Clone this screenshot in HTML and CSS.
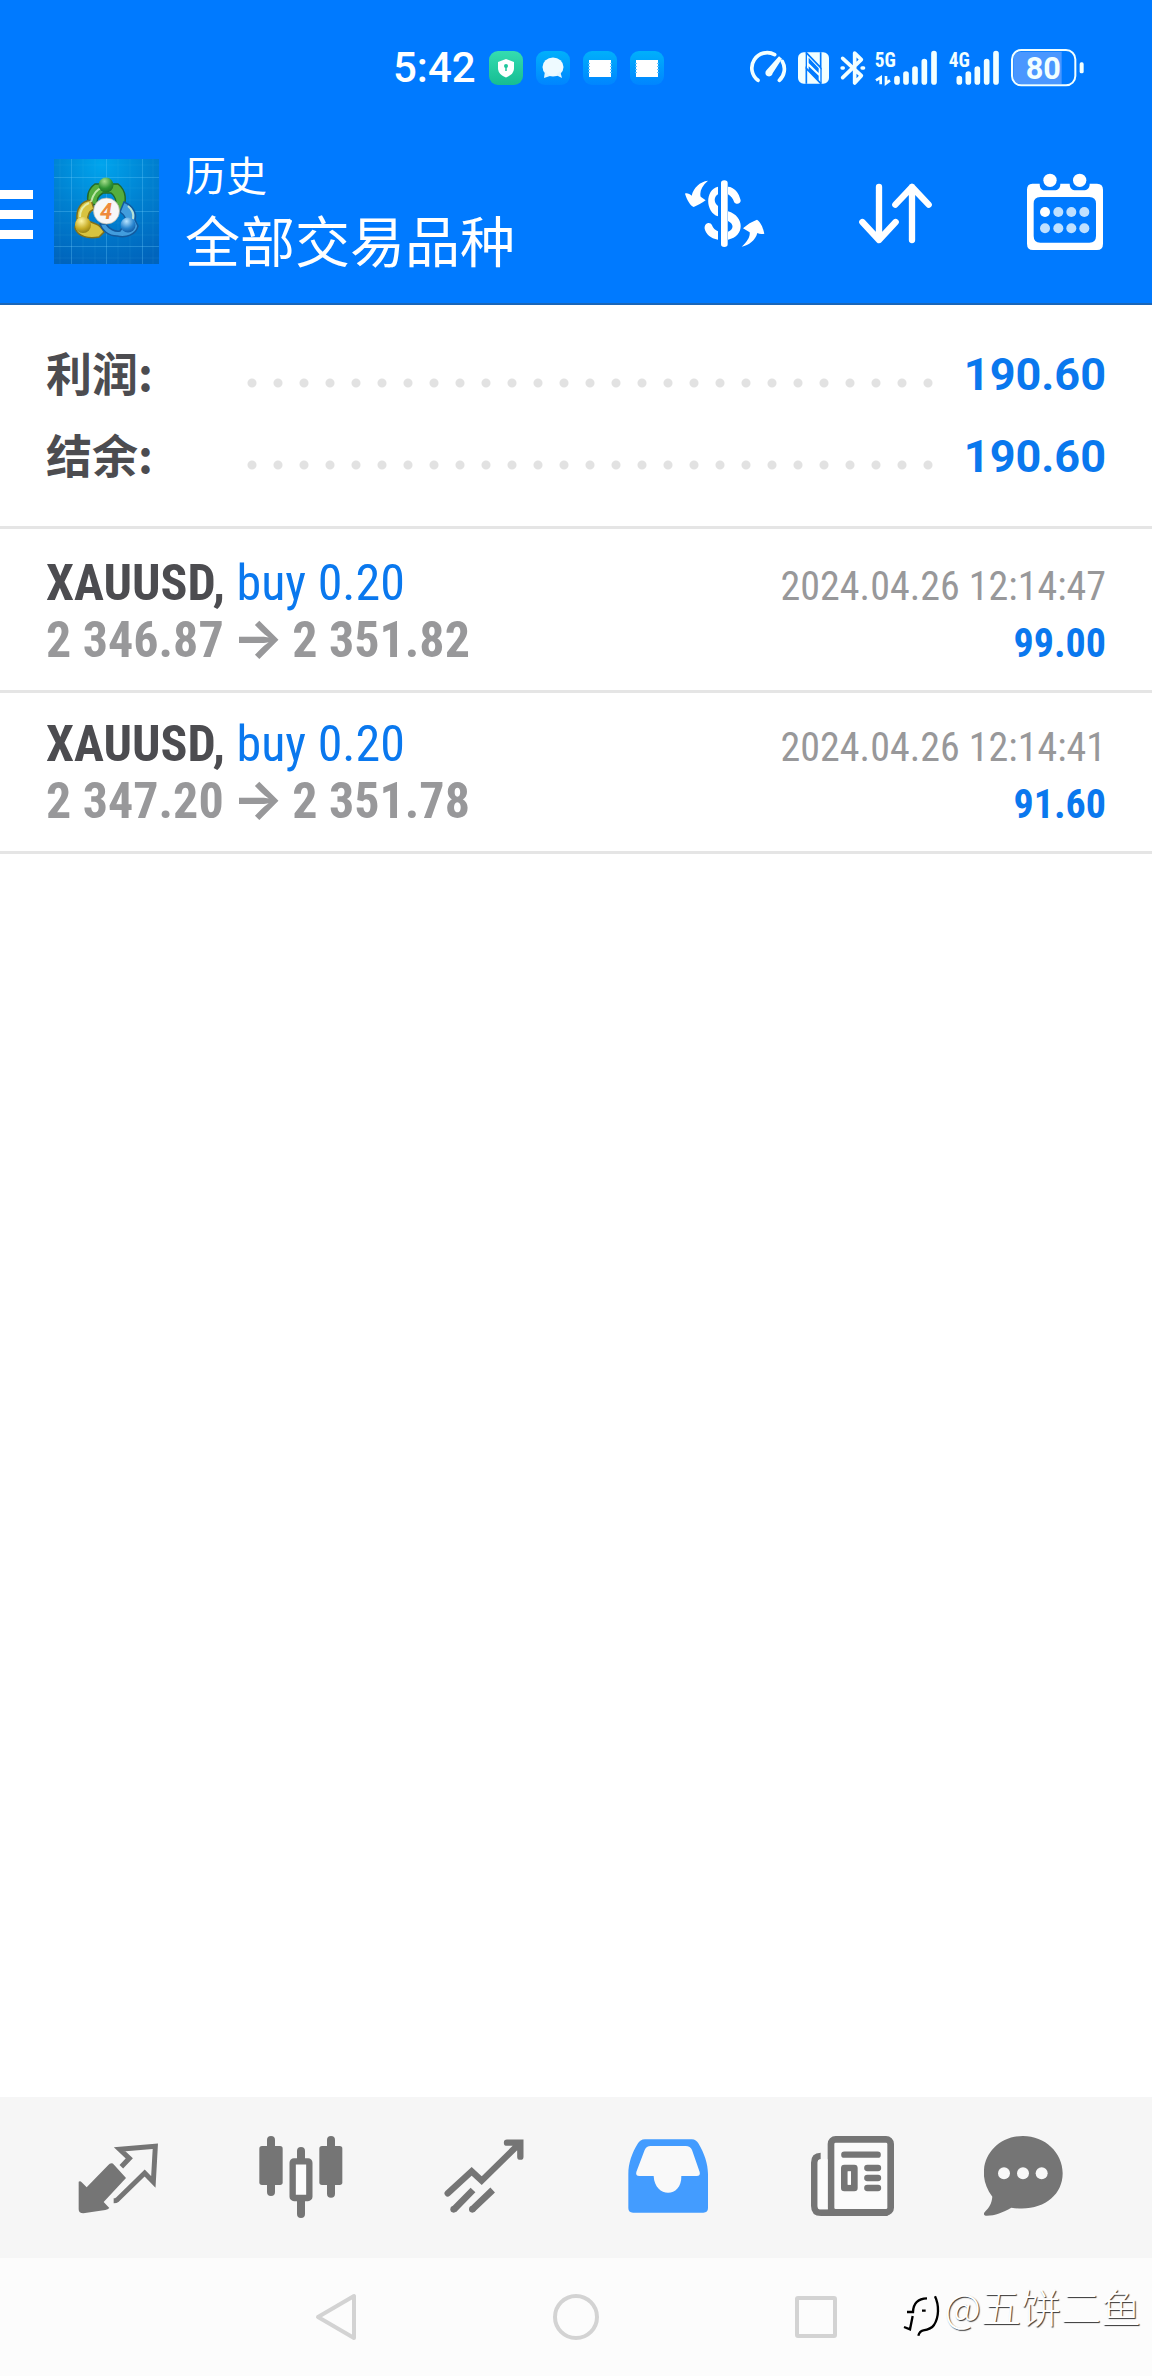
FILE: index.html
```html
<!DOCTYPE html>
<html lang="zh-CN">
<head>
<meta charset="utf-8">
<meta name="viewport" content="width=device-width, initial-scale=1">
<title>历史</title>
<link rel="stylesheet" href="styles.css">
</head>
<body>
<div class="app">
  <header class="top">
    <div class="status">
      <div class="status-group status-left">
        <span class="clock">5:42</span>
        <svg class="notice" viewBox="0 0 34 34" aria-hidden="true"><rect width="34" height="34" rx="9" fill="url(#green)"/><path d="M17 8l8 3v6c0 5-3.500 7.500-8 9.500C12.500 24.500 9 22 9 17v-6z" fill="#fff"/><circle cx="17" cy="15" r="2" fill="#1fc79c"/><path d="M17 15v5" stroke="#1fc79c" stroke-width="1.500"/></svg>
        <svg class="notice" viewBox="0 0 34 34" aria-hidden="true"><rect width="34" height="34" rx="9" fill="url(#cyan)"/><ellipse cx="17" cy="16" rx="10.500" ry="9.500" fill="#eefaff"/><path d="M9 20l-1 7 6-2zM24 20l2 7-6-3z" fill="#e3f6ff"/></svg>
        <svg class="notice" viewBox="0 0 34 34" aria-hidden="true"><rect width="34" height="34" rx="9" fill="url(#cyan)"/><path d="M6 9h22v17H6z" fill="#fff"/><path d="M6 12v11M28 12v11" stroke="#59c0ff" stroke-width="2" stroke-dasharray="1 2"/></svg>
        <svg class="notice" viewBox="0 0 34 34" aria-hidden="true"><rect width="34" height="34" rx="9" fill="url(#cyan)"/><path d="M6 9h22v17H6z" fill="#fff"/><path d="M6 12v11M28 12v11" stroke="#59c0ff" stroke-width="2" stroke-dasharray="1 2"/></svg>
      </div>
      <div class="status-group status-right">
        <svg width="45" height="42" viewBox="57 50 135 126" aria-hidden="true"><path d="M84 150A46 46 0 0 1 134 73M157 93A46 46 0 0 1 148 150" fill="none" stroke="#f2ffff" stroke-width="11" stroke-linecap="round"/><path d="M147 78l9 7-28 44a11 11 0 1 1-18-10z" fill="#f2ffff"/></svg>
        <svg width="42" height="42" viewBox="192 50 126 126" aria-hidden="true"><rect x="204" y="66" width="93" height="94" rx="17" fill="#f2ffff"/><path d="M228 66l44 46V66M273 160l-44-46v46" fill="none" stroke="#007aff" stroke-width="5"/><path d="M236 82l30 32v14l-30-30zM236 108l30 28v14l-30-28z" fill="#007aff"/><path d="M229 66v50M273 112v48" stroke="#007aff" stroke-width="4"/></svg>
        <svg width="35" height="42" viewBox="318 50 105 126" aria-hidden="true"><path d="M338 84l56 52-20 22V68l20 20-56 54" fill="none" stroke="#f2ffff" stroke-width="11" stroke-linejoin="round" stroke-linecap="round"/><path d="M336 113h4M396 113h5" stroke="#f2ffff" stroke-width="10" stroke-linecap="round"/></svg>
        <svg width="72" height="42" viewBox="423 50 216 126" role="img" aria-label="5G"><text class="net" x="434" y="109">5G</text><path d="M501 155v-10M528 155v-24M555 155v-39M583 155v-61M612 155V70" stroke="#f2ffff" stroke-width="17" stroke-linecap="round"/><path d="M438 150l14-9v21M468 137v22l12-9" fill="none" stroke="#f2ffff" stroke-width="8"/></svg>
        <svg width="61" height="42" viewBox="639 50 183 126" role="img" aria-label="4G"><text class="net" x="656" y="109">4G</text><path d="M688 155v-10M715 155v-24M742 155v-39M770 155v-61M798 155V70" stroke="#f2ffff" stroke-width="17" stroke-linecap="round"/></svg>
        <svg width="84" height="42" viewBox="822 50 252 126" role="img" aria-label="80%"><path d="M875 64h120v97H875q-25 0-25-25V89q0-25 25-25z" fill="#4a97ff"/><rect x="846" y="59" width="190" height="106" rx="28" fill="none" stroke="#f2ffff" stroke-width="6"/><rect x="1049" y="96" width="12" height="33" rx="5" fill="#f2ffff"/><text class="charge" x="940" y="146">80</text></svg>
      </div>
    </div>
    <div class="appbar">
      <button class="menu" type="button" aria-label="菜单"><svg width="34" height="50" viewBox="0 0 34 50"><path d="M0 0h33v9H0zM0 20h33v9H0zM0 40h33v9H0z" fill="#fff"/></svg></button>
      <svg class="logo" viewBox="0 0 105 105" aria-hidden="true">
        <defs>
          <linearGradient id="green" x1="0" y1="0" x2="0" y2="1"><stop offset="0" stop-color="#35dcb0"/><stop offset="1" stop-color="#16bd92"/></linearGradient>
          <linearGradient id="cyan" x1="0" y1="0" x2="0" y2="1"><stop offset="0" stop-color="#00b0fb"/><stop offset="1" stop-color="#0085ff"/></linearGradient>
          <radialGradient id="sky" cx=".45" cy=".05" r="1"><stop offset="0" stop-color="#00a5ee"/><stop offset=".5" stop-color="#0080d0"/><stop offset="1" stop-color="#0064bc"/></radialGradient>
          <radialGradient id="gball" cx=".4" cy=".25" r=".8"><stop offset="0" stop-color="#a8e08c"/><stop offset=".6" stop-color="#2e9434"/><stop offset="1" stop-color="#1c6b25"/></radialGradient>
          <radialGradient id="yball" cx=".4" cy=".25" r=".8"><stop offset="0" stop-color="#fff6a4"/><stop offset=".6" stop-color="#c9ae28"/><stop offset="1" stop-color="#8f7a10"/></radialGradient>
          <radialGradient id="bball" cx=".4" cy=".25" r=".8"><stop offset="0" stop-color="#b8e4ff"/><stop offset=".6" stop-color="#2a86cf"/><stop offset="1" stop-color="#0d55a0"/></radialGradient>
        </defs>
        <rect width="105" height="105" fill="url(#sky)"/>
        <path d="M6 0v105M29 0v105M41 0v105M64 0v105M76 0v105M99 0v105M0 6h105M0 29h105M0 41h105M0 64h105M0 76h105M0 99h105" stroke="#5cc4f5" stroke-opacity=".1"/>
        <path d="M17.500 0v105M52.500 0v105M88.500 0v105M0 18.500h105M0 52.500h105M0 87.500h105" stroke="#6fd0ff" stroke-opacity=".3"/>
        <path d="M41 25C34 30 32 38 35 45l9 1c-2-5 0-9 5-12l8 0c5 4 7 11 2 20l8-2c7-9 5-21-3-27z" fill="#54ae3e" stroke="#22692a" stroke-width="1.500"/>
        <path d="M37 41c-10 1-15 9-14 20l-2 8c3 9 14 11 24 9l5-5c-2-4-5-7-8-8l-8-3c-1-6 2-10 6-12z" fill="#d8c33f" stroke="#80701a" stroke-width="1.500"/>
        <path d="M70 43c9 4 13 11 11 18l3 6c-2 9-12 12-21 10-9 0-15-6-17-12l6 0c3 5 9 8 14 7l6-9c0-4-3-8-6-10z" fill="#429ddd" stroke="#125a9e" stroke-width="1.500"/>
        <path d="M37 43c2-7 5-13 11-14M26 58c0-7 4-12 9-14M74 47c5 4 6 8 5 13" fill="none" stroke="#e9ffd4" stroke-opacity=".7" stroke-width="2"/>
        <circle cx="52" cy="26" r="7.500" fill="url(#gball)"/><circle cx="29" cy="66" r="8" fill="url(#yball)"/><circle cx="74" cy="66" r="7.500" fill="url(#bball)"/>
        <circle cx="52.500" cy="52" r="13" fill="#f7f7f7" stroke="#b5b5a5" stroke-width=".7"/>
        <text class="logo-digit" x="52" y="60">4</text>
      </svg>
      <div class="titles"><h1 class="title">历史</h1><p class="subtitle">全部交易品种</p></div>
      <button class="action" type="button" aria-label="货币"><svg viewBox="60 48 270 270"><path d="M174 107v23c-12 6-14 25 0 35v31c-38-12-40-80 0-89zM204 107c18 1 33 18 38 41 1 12-16 14-20 4-3-9-9-17-18-22zM204 181c50 14 52 76 0 85v-24c18-6 18-24 0-32zM174 266c-23-4-36-17-40-33-2-18 17-23 22-10 3 9 10 15 18 18zM183 96q0-8 10-8t10 8v184q0 8-10 8t-10-8z" fill="#fff"/><path d="M144 89c-19 16-26 33-22 48l15 11c-12 8-23 15-36 20-11-5-20-22-26-40 6-3 15 2 20 6 6-24 24-42 49-45zM245 287c17-15 26-31 24-43l-20-12c13-12 26-20 42-26 12 8 18 24 22 42q-12 3-21-2c-6 22-25 37-47 41z" fill="#fff"/></svg></button>
      <button class="action" type="button" aria-label="排序"><svg viewBox="570 48 270 270"><path d="M657 108v159M607 213l50 54 50-54M756 267V108M706 161l50-53 50 53" fill="none" stroke="#fff" stroke-width="19" stroke-linecap="round" stroke-linejoin="round"/></svg></button>
      <button class="action" type="button" aria-label="日期"><svg viewBox="1080 48 270 270"><path fill-rule="evenodd" d="M1117 98h22c0 16 8 20 18 20h26c10 0 18-6 18-20h28c0 14 8 20 18 20h24c10 0 18-6 18-20h22q18 0 18 18v162q0 19-18 19h-192q-18 0-18-19V116q0-18 16-18zM1141 138q-20 0-20 20v97q0 20 20 20h147q20 0 20-20v-97q0-20-20-20z" fill="#fff"/><circle cx="1170" cy="88" r="20" fill="#fff"/><circle cx="1259" cy="88" r="20" fill="#fff"/><circle cx="1155" cy="183" r="15" fill="#fff"/><g fill="#bfe0ff"><circle cx="1195" cy="183" r="15"/><circle cx="1234" cy="183" r="15"/><circle cx="1273" cy="183" r="15"/><circle cx="1155" cy="232" r="15"/><circle cx="1195" cy="232" r="15"/><circle cx="1234" cy="232" r="15"/><circle cx="1273" cy="232" r="15"/></g></svg></button>
    </div>
  </header>

  <main class="content">
    <dl class="summary">
      <div class="sum-row"><dt class="sum-label">利润:</dt><dd class="leader" aria-hidden="true"></dd><dd class="sum-value">190.60</dd></div>
      <div class="sum-row"><dt class="sum-label">结余:</dt><dd class="leader" aria-hidden="true"></dd><dd class="sum-value">190.60</dd></div>
    </dl>
    <ul class="deals">
      <li class="deal">
        <div class="deal-line"><span class="symbol">XAUUSD, <span class="side">buy 0.20</span></span><time class="time">2024.04.26 12:14:47</time></div>
        <div class="deal-line"><span class="prices">2 346.87 <span class="arrow">→</span> 2 351.82</span><span class="profit">99.00</span></div>
      </li>
      <li class="deal">
        <div class="deal-line"><span class="symbol">XAUUSD, <span class="side">buy 0.20</span></span><time class="time">2024.04.26 12:14:41</time></div>
        <div class="deal-line"><span class="prices">2 347.20 <span class="arrow">→</span> 2 351.78</span><span class="profit">91.60</span></div>
      </li>
    </ul>
  </main>

  <nav class="tabs">
    <button class="tab" type="button" aria-label="行情"><svg viewBox="57 144 297 297"><path d="M184 250q5 0 8 4l36 40-67 72 17 18q-4 5-12 6l-66 10q-14 0-14-12V305q5-3 9 2l15 15 65-67q4-5 9-5z" fill="currentColor"/><path d="M214 260l24-25-29-27 107-9-6 107-26-27-82 80q-4 3-11 3" fill="none" stroke="currentColor" stroke-width="15"/></svg></button>
    <button class="tab" type="button" aria-label="图表"><svg viewBox="606 144 297 297"><path d="M663 180v156M843 180v161M753 213v30M753 355v47" stroke="currentColor" stroke-width="24" stroke-linecap="round"/><rect x="628" y="198" width="70" height="117" rx="8" fill="currentColor"/><rect x="808" y="198" width="69" height="117" rx="8" fill="currentColor"/><rect x="728" y="244" width="50" height="110" rx="4" fill="#fcfcfc" stroke="currentColor" stroke-width="19"/></svg></button>
    <button class="tab" type="button" aria-label="交易"><svg viewBox="1155 144 297 297"><path d="M1193 340l72-66 30 28 113-111M1371 188h40v42" fill="none" stroke="currentColor" stroke-width="19" stroke-linecap="round"/><path d="M1212 388l57-58M1267 388l61-58" stroke="currentColor" stroke-width="20"/><circle cx="1211" cy="388" r="10" fill="currentColor"/><circle cx="1267" cy="388" r="10" fill="currentColor"/></svg></button>
    <button class="tab tab-active" type="button" aria-label="历史" aria-current="page"><svg viewBox="84 144 297 297"><path d="M165 178h140c10 0 16 5 20 12 18 30 29 62 29 92v102q0 14-14 14H129q-14 0-14-14V282c0-30 10-62 29-92 4-7 11-12 21-12z" fill="currentColor"/><path d="M182 198h105q14 0 19 12l23 66q3 12-9 12h-46c2 67-80 67-83 0h-43q-12 0-9-12l25-66q5-12 18-12z" fill="#f9f9f9"/></svg></button>
    <button class="tab" type="button" aria-label="新闻"><svg viewBox="633 144 297 297"><path d="M692 228q-19 0-19 20v129q0 21 20 21h200" fill="none" stroke="currentColor" stroke-width="20"/><rect x="723" y="178" width="179" height="219" rx="14" fill="#fbfbfb" stroke="currentColor" stroke-width="20"/><path d="M683 248q0-10 12-10h18v150h-22q-8 0-8-8z" fill="#fbfbfb"/><path d="M763 224h100M832 264h32M832 294h32M832 324h32" stroke="currentColor" stroke-width="19" stroke-linecap="round"/><rect x="763" y="264" width="30" height="60" fill="none" stroke="currentColor" stroke-width="20" stroke-linejoin="round"/><path d="M778 275v39" stroke="#fff" stroke-width="9"/></svg></button>
    <button class="tab" type="button" aria-label="信箱"><svg viewBox="1182 144 297 297"><path d="M1299 168c66 0 119 50 119 112 0 70-66 118-154 103-25 14-49 24-73 24-10 0-12-6-6-12 14-13 20-26 22-45-60-77-8-182 92-182z" fill="currentColor"/><g fill="#f8f8f8"><circle cx="1242" cy="280" r="18"/><circle cx="1299" cy="280" r="18"/><circle cx="1355" cy="280" r="18"/></g></svg></button>
  </nav>

  <footer class="system">
    <button class="sys" type="button" aria-label="返回"><svg viewBox="0 0 48 48"><path d="M42 3v42L6 24z" fill="none" stroke="currentColor" stroke-width="4" stroke-linejoin="round"/></svg></button>
    <button class="sys" type="button" aria-label="主屏幕"><svg viewBox="0 0 48 48"><circle cx="24" cy="24" r="21" fill="none" stroke="currentColor" stroke-width="4"/></svg></button>
    <button class="sys" type="button" aria-label="最近任务"><svg viewBox="0 0 48 48"><rect x="5" y="5" width="38" height="38" rx="1" fill="none" stroke="currentColor" stroke-width="4" stroke-linejoin="round"/></svg></button>
    <div class="watermark">
      <svg width="44" height="48" viewBox="84 130 132 144" aria-hidden="true"><path d="M102 190h18c1-27 14-40 42-41M186 143c13 28 12 62-3 86-8 12-18 14-32 16-8 2-13 8-15 16M119 202l-8 40-18-7M147 186h11" fill="none" stroke="#000" stroke-width="7"/></svg>
      <span class="handle">@五饼二鱼</span>
    </div>
  </footer>
</div>
</body>
</html>
```
FILE: styles.css
```css
* { box-sizing: border-box; }
body {
  margin: 0;
  background: #fff;
  font-family: Roboto, "Noto Sans CJK SC", sans-serif;
}
h1, p, dl, dd, ul { margin: 0; padding: 0; }
ul { list-style: none; }
button {
  border: 0;
  padding: 0;
  background: none;
  color: inherit;
  font: inherit;
  display: flex;
  align-items: center;
  justify-content: center;
}
svg { display: block; flex: none; }

.app { min-height: 100vh; display: flex; flex-direction: column; }

/* header */
.top { background: #007aff; color: #fff; border-bottom: 2px solid #1b66b8; }
.status {
  display: flex;
  justify-content: space-between;
  align-items: center;
  height: 116px;
  padding: 20px 64px 0 393px;
}
.status-group { display: flex; align-items: center; }
.status-left { gap: 13px; }
.clock { font-size: 42px; line-height: 48px; font-weight: 500; }
.notice { width: 34px; height: 34px; }
.net { font: 700 58px "Roboto Condensed", Roboto, sans-serif; fill: #f2ffff; }
.charge { font: 700 92px Roboto, sans-serif; fill: #f2ffff; text-anchor: middle; }

.appbar { display: flex; align-items: center; height: 187px; padding: 4px 2px 0 0; }
.menu { height: 100px; padding-top: 6px; }
.logo { width: 105px; height: 105px; margin-left: 20px; }
.logo-digit { font: italic 700 22px Roboto, sans-serif; fill: #ef8b3c; text-anchor: middle; }
.titles { flex: 1; padding: 2px 0 0 26px; }
.title { font-size: 41px; line-height: 60px; font-weight: 400; }
.subtitle { font-size: 55px; line-height: 72px; }
.action { width: 170px; height: 120px; }
.action svg { width: 90px; height: 90px; }

/* totals */
.content { flex: 1; }
.summary { padding: 29px 46px 28px; border-bottom: 3px solid #e5e5e5; }
.sum-row { display: flex; align-items: center; height: 82px; }
.sum-label {
  width: 193px;
  padding-bottom: 8px;
  font-family: "Noto Sans CJK SC", sans-serif;
  font-size: 46px;
  line-height: 60px;
  font-weight: 700;
  color: #4c4c50;
}
.leader {
  flex: 1;
  height: 26px;
  margin: 16px 24px 0 0;
  background: radial-gradient(circle, #e2e2e2 4px, transparent 5px) 0 0 / 26px 26px repeat-x;
}
.sum-value { font-size: 45px; line-height: 60px; font-weight: 700; color: #0a78ee; }

/* deals */
.deals { padding-top: 3px; }
.deal {
  padding: 23px 46px;
  border-bottom: 3px solid #e5e5e5;
  font-family: "Roboto Condensed", "Liberation Sans Narrow", Roboto, sans-serif;
}
.deal-line { display: flex; justify-content: space-between; align-items: baseline; height: 56px; line-height: 56px; }
.symbol { font-size: 50px; font-weight: 700; color: #4c4c50; }
.side { font-weight: 400; color: #0a78ee; }
.prices { font-size: 50px; font-weight: 700; color: #98989a; }
.arrow { margin: 0 -3px; font-family: Inter, sans-serif; font-size: 54px; line-height: 1; }
.time { font-size: 40px; color: #98989a; }
.profit { font-size: 40px; font-weight: 700; color: #0a78ee; }

/* tab bar */
.tabs {
  display: grid;
  grid-template-columns: repeat(6, 1fr);
  height: 161px;
  padding: 0 27px;
  background: #f6f6f6;
  color: #757575;
}
.tab svg { width: 99px; height: 99px; }
.tab-active { color: #439cff; }

/* system keys */
.system {
  position: relative;
  display: flex;
  justify-content: center;
  gap: 192px;
  height: 118px;
  background: #fcfcfc;
  color: #d3d3d3;
}
.sys svg { width: 48px; height: 48px; }
.watermark { position: absolute; right: 11px; bottom: 36px; display: flex; align-items: flex-end; }
.handle {
  padding-bottom: 8px;
  font: 300 40px/52px "Noto Sans CJK SC", sans-serif;
  color: #fff;
  text-shadow: 1px 1px 1px #333;
}
```
